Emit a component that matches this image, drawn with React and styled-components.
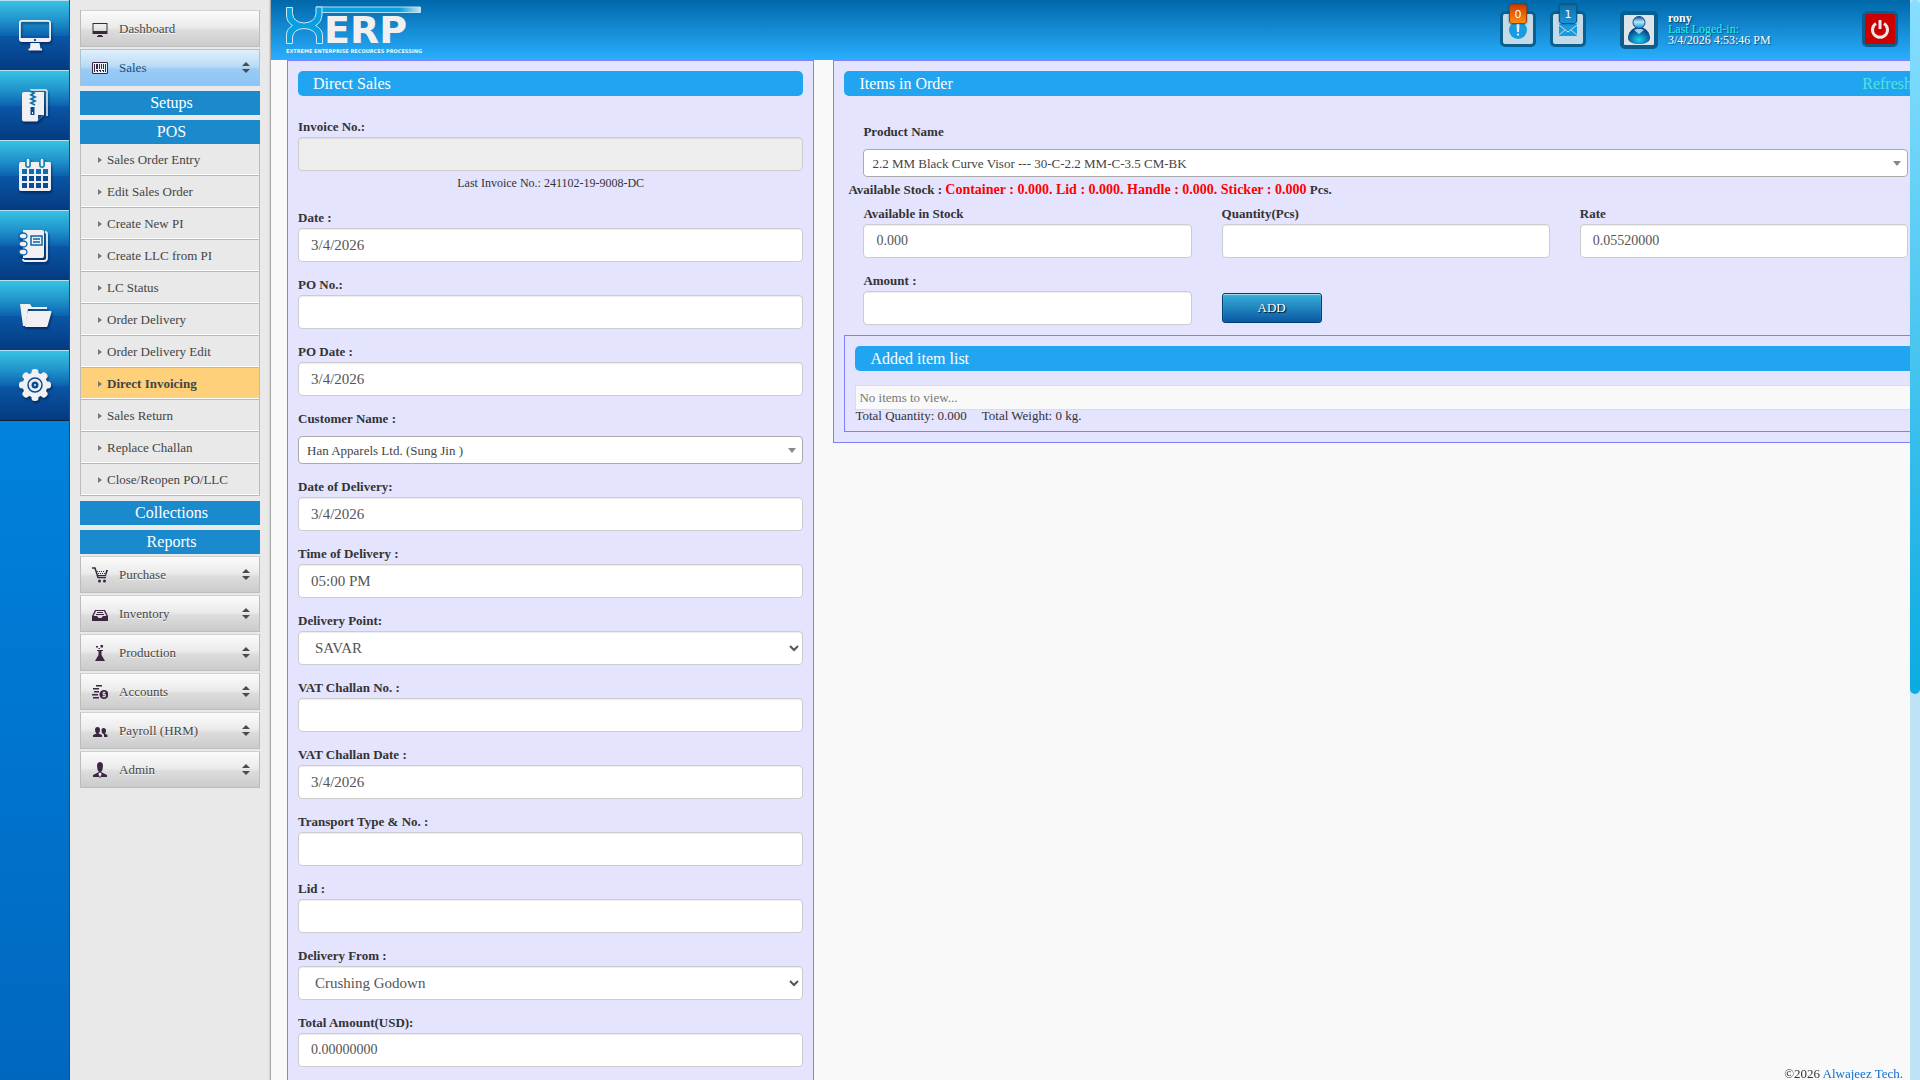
import React from "react";
import styled, { createGlobalStyle, css } from "styled-components";

const GlobalStyle = createGlobalStyle`
  *, *::before, *::after { box-sizing: border-box; }
  body {
    margin: 0;
    background: #f9f9f9;
    color: #333;
    font-family: "Book Antiqua", "Liberation Serif", serif;
    font-size: 13px;
    line-height: 18px;
  }
  button, input, select { font-family: inherit; margin: 0; }
  a { text-decoration: none; }
`;

const Shell = styled.div`
  display: flex;
  height: 100vh;
  padding-right: 10px;
  overflow: hidden;
`;

/* ---------- icon rail ---------- */

const Rail = styled.nav`
  flex: 0 0 70px;
  display: flex;
  flex-direction: column;
  border-right: 1px solid #04539b;
  background: linear-gradient(#0094f0, #0067bf);
`;

const RailButton = styled.button`
  display: grid;
  place-items: center;
  width: 100%;
  height: 70px;
  padding: 0 0 2px;
  border: 0;
  border-top: 1px solid #b5e2f3;
  background: linear-gradient(#38c2e2 0%, #1f93cc 28%, #0c64b0 50%, #0a56a6 51%, #043a80 100%);
  cursor: pointer;

  &:last-child { box-shadow: 0 1px #06223f; }

  svg { filter: drop-shadow(1px 2px 1px rgba(0, 20, 60, 0.6)); }
`;

/* ---------- side menu ---------- */

const Sidebar = styled.aside`
  flex: 0 0 201px;
  padding: 10px;
  border-right: 1px solid #a9a9a9;
  background: #e9e9e9;
  box-shadow: inset -2px 0 1px -1px #d4d4d4;
`;

const MenuButton = styled.button`
  display: flex;
  align-items: center;
  gap: 11px;
  width: 180px;
  height: 37px;
  margin-bottom: 2px;
  padding: 0 9px 0 11px;
  border: 1px solid #bcbcbc;
  border-top-color: #d0d0d0;
  background: linear-gradient(#fbfbfb 0%, #ebebeb 46%, #dcdcdc 56%, #cbcbcb 100%);
  color: #444;
  font-size: 13px;
  text-align: left;
  text-shadow: 0 1px #fff;
  cursor: pointer;

  ${(p) => p.$active && css`
    border-color: #a5c4d6;
    background: linear-gradient(#e0effb 0%, #b9dbf7 46%, #9bcbf5 56%, #8bc4f6 100%);
    color: #15527c;
    text-shadow: none;
  `}

  span { flex: 1; }
`;

const GroupButton = styled.button`
  display: block;
  width: 180px;
  height: 24px;
  margin: 5px 0 0;
  padding: 0 0 0 3px;
  border: 0;
  background: #1a8acd;
  color: #fff;
  font-size: 16px;
  line-height: 24px;
  cursor: pointer;
`;

const MenuGroup = styled.div`
  margin: ${(p) => (p.$first ? "0" : "2px 0 0")};
`;

const SubList = styled.ul`
  width: 180px;
  margin: 0;
  padding: 0;
  list-style: none;
  border: solid #bcbcbc;
  border-width: 0 1px;
`;

const SubLink = styled.a`
  display: flex;
  align-items: center;
  gap: 4px;
  height: 32px;
  padding-left: 17px;
  border-bottom: 1px solid #b8b8b8;
  box-shadow: inset 0 -1px #fff;
  background: ${(p) => (p.$current ? "#fed07a" : "transparent")};
  color: #444;
  font-weight: ${(p) => (p.$current ? "bold" : "normal")};
  white-space: nowrap;

  &::before {
    content: "";
    border: 3px solid transparent;
    border-left: 4px solid #777;
    border-right: 0;
    margin-right: 1px;
  }
`;

/* ---------- header ---------- */

const Workspace = styled.div`
  flex: 1;
  min-width: 0;
  display: flex;
  flex-direction: column;
`;

const Header = styled.header`
  flex: 0 0 60px;
  display: flex;
  align-items: flex-start;
  padding: 0 12px 0 15px;
  background: linear-gradient(#0067a9, #2aafff);
`;

const Logo = styled.a`
  display: flex;
  flex-direction: column;
  margin-right: auto;
  padding-top: 5px;
  color: #f2f2f2;
  font: bold 5px/7px "DejaVu Sans", sans-serif;
  white-space: nowrap;

  svg { overflow: visible; }
`;

const HeaderTools = styled.div`
  display: flex;
  gap: 14px;
  padding-top: 11px;
`;

const ToolButton = styled.button`
  position: relative;
  display: grid;
  place-items: center;
  width: 36px;
  height: 36px;
  padding: 0;
  border: 3px solid #0a5f8e;
  border-radius: 5px;
  background: ${(p) => (p.$danger ? "#cc0000" : "#c3dbe8")};
  cursor: pointer;
`;

const Badge = styled.span`
  position: absolute;
  top: -10px;
  left: 6px;
  width: 18px;
  height: 20px;
  border: 1px solid ${(p) => (p.$hot ? "#a33a08" : "#07588c")};
  border-radius: 3px;
  background: ${(p) => (p.$hot ? "linear-gradient(#cf3c00, #fb8c10)" : "linear-gradient(#0d6ea9, #1e92d6)")};
  box-shadow: 0 0 2px rgba(0, 40, 80, 0.7);
  color: #fff;
  font: 11px/19px "DejaVu Sans", sans-serif;
  text-align: center;
`;

const UserBlock = styled.div`
  display: flex;
  gap: 10px;
  width: 242px;
  margin-left: 34px;
  padding-top: 11px;
`;

const Avatar = styled.span`
  display: grid;
  place-items: center;
  width: 38px;
  height: 38px;
  border: 4px solid #0a5f8e;
  border-radius: 5px;
  background: #dde3e8;
`;

const UserText = styled.div`
  padding-top: 2px;
  color: #fff;
  font-size: 12px;
  line-height: 11px;
  text-shadow: 1px 1px 1px rgba(0, 0, 0, 0.5);
  strong, em, time { display: block; }
  em { color: #1ef4f4; font-style: normal; }
`;

/* ---------- content ---------- */

const Content = styled.main`
  flex: 1;
  min-height: 0;
  overflow: hidden auto;
  scrollbar-width: none;
`;

const Columns = styled.div`
  display: grid;
  grid-template-columns: 10fr 21fr;
  gap: 19px;
  align-items: start;
  width: calc(100% + 31px);
  padding-left: 16px;
`;

const Panel = styled.section`
  padding: 10px;
  border: 1px solid #8080ff;
  background: #e4e4ff;
`;

const PanelTitle = styled.h2`
  display: flex;
  justify-content: space-between;
  margin: 0;
  height: 25px;
  padding: 0 18px 0 15px;
  border-radius: 5px;
  background: #22a5f1;
  color: #fff;
  font-size: 16px;
  font-weight: normal;
  line-height: 25px;

  a { color: #4fe3dc; }
`;

const FieldStack = styled.form`
  padding-top: 23px;
`;

const FieldBox = styled.div`
  display: flex;
  flex-direction: column;
  margin-bottom: 15px;
`;

const Label = styled.label`
  margin-bottom: ${(p) => (p.$spaced ? "9px" : "2px")};
  font-weight: bold;
  line-height: 16px;
`;

const control = css`
  width: 100%;
  height: 34px;
  border: 1px solid #ccc;
  border-radius: 4px;
  background: #fff;
  box-shadow: inset 0 1px 1px rgba(0, 0, 0, 0.075);
  color: #555;
  font-size: ${(p) => (p.$numeric ? "14px" : "15px")};
`;

const TextInput = styled.input`
  ${control}
  padding: 6px 12px;
  &:disabled { background: #eee; }
`;

const NativeSelect = styled.select`
  ${control}
  padding: 6px 12px;
`;

const Hint = styled.p`
  margin: 0;
  font-size: 12px;
  line-height: 24px;
  text-align: center;
`;

const ComboWrap = styled.div`
  position: relative;
  &::after {
    content: "";
    position: absolute;
    top: 12px;
    right: 7px;
    border: 4px solid transparent;
    border-top: 5px solid #888;
    border-bottom: 0;
    pointer-events: none;
  }
`;

const ComboSelect = styled.select`
  appearance: none;
  display: block;
  width: 100%;
  height: 28px;
  padding: 0 8px;
  border: 1px solid #aaa;
  border-radius: 4px;
  background: #fff;
  color: #444;
  font-size: 13px;
`;

const OrderForm = styled.form`
  padding: 28px 22px 0 19px;
`;

const ProductField = styled.div`
  display: flex;
  flex-direction: column;
`;

const Stock = styled.p`
  margin: 4px 0 7px -15px;
  font-weight: bold;
  line-height: 18px;
  span { color: #f00; font-size: 14px; }
`;

const OrderGrid = styled.div`
  display: grid;
  grid-template-columns: repeat(3, 1fr);
  column-gap: 30px;
  margin-bottom: -5px;
`;

const AddButton = styled.button`
  align-self: start;
  width: 100px;
  height: 30px;
  margin-top: 20px;
  border: 1px solid #033e72;
  border-radius: 3px;
  background: linear-gradient(#36b0d8, #0a58a4);
  box-shadow: inset 0 1px 1px rgba(255, 255, 255, 0.6);
  color: #fff;
  font-size: 13px;
  text-shadow: 1px 1px 1px #000;
  cursor: pointer;
`;

const ItemTable = styled.table`
  width: 100%;
  margin-top: 14px;
  border-collapse: collapse;
  td {
    height: 24px;
    padding: 0 3px;
    border: 1px solid #ddd;
    background: #f9f9f9;
    color: #777;
    line-height: 22px;
  }
`;

const Totals = styled.div`
  display: flex;
  gap: 15px;
  line-height: 11px;
`;

const Footer = styled.footer`
  position: fixed;
  right: 17px;
  bottom: -3px;
  a { color: #0a6fd0; }
`;

const ScrollTrack = styled.div`
  position: fixed;
  inset: 0 0 0 auto;
  width: 10px;
  background: #bee3f5;
`;

const ScrollThumb = styled.div`
  height: calc(64% + 3px);
  border-radius: 5px;
  background: linear-gradient(#88dfff, #0aabe1);
`;

/* ---------- drawings ---------- */

const W = "#f0f0f2";
const D = "#3b2840";

const railIcons = [
  ["Desktop", (
    <g fill={W}>
      <path fillRule="evenodd" d="M4 2h26a3 3 0 0 1 3 3v16a3 3 0 0 1-3 3H4a3 3 0 0 1-3-3V5a3 3 0 0 1 3-3zm0 1.800a1.200 1.200 0 0 0-1.200 1.200V20h28.400V5a1.200 1.200 0 0 0-1.200-1.200z" />
      <path d="M12.500 25h9l1 5.500h1.500v2H10.500v-2H12z" />
      <circle cx="17" cy="22" r="1.200" fill="#0b5aa8" />
    </g>
  )],
  ["Archive", (
    <g>
      <path d="M12 2h15.500a1.500 1.500 0 0 1 1.500 1.500V28" fill="none" stroke={W} strokeWidth="1.500" />
      <path d="M6 4h20v23l-7 6.500H6a2 2 0 0 1-2-2V6a2 2 0 0 1 2-2z" fill={W} />
      <path d="M20 32.500V27h5.500z" fill="#0a4a96" />
      <path d="M12 3l4 2-3 2 4 2-4 2 4 2-4 2 4 2" fill="none" stroke="#0d6fae" strokeWidth="1.800" />
      <path d="M12.500 19h4v8h-4z" fill="#0a4a96" />
      <path d="M14 24h1v2h-1z" fill={W} />
    </g>
  )],
  ["Calendar", (
    <g>
      <path d="M2 4h30a2 2 0 0 1 1 2v25a2 2 0 0 1-2 2H3a2 2 0 0 1-2-2V6z" fill={W} />
      <path d="M10 3v4M24 3v4" stroke="#1a86c2" strokeWidth="6" strokeLinecap="round" />
      <path d="M10 2v5M24 2v5" stroke={W} strokeWidth="2.500" strokeLinecap="round" />
      {[11, 18, 25].map((y) => [4, 11, 18, 25].map((x) => (
        <rect key={`${x}-${y}`} x={x} y={y} width="5" height="5" fill={y > 17 ? "#0a4a96" : "#0f6db4"} />
      )))}
    </g>
  )],
  ["Notebook", (
    <g>
      <path d="M27 4a2 2 0 0 1 2 2v24a3 3 0 0 1-3 3H7q-2 0-2-2" fill="none" stroke={W} strokeWidth="1.800" />
      <path d="M5 2h19a2 2 0 0 1 2 2v24a2 2 0 0 1-2 2H5z" fill={W} />
      {[8, 16, 24].map((y) => <ellipse key={y} cx="5" cy={y} rx="4" ry="3" fill={W} stroke="#0d62ab" strokeWidth="1.300" />)}
      <path d="M13 8h11v9H13zM15 11h7M15 14h7" fill="none" stroke="#0d62ab" strokeWidth="1.500" />
    </g>
  )],
  ["Folders", (
    <g fill={W}>
      <path d="M2 6h10l2 3h15v2H10L7.500 28H5z" />
      <path d="M10.500 14h22L28.500 28H8z" stroke={W} strokeLinejoin="round" strokeWidth="2" />
    </g>
  )],
  ["Settings", (
    <g>
      {[0, 45, 90, 135].map((r) => (
        <rect key={r} x="13.500" y="1" width="7" height="32" rx="3" fill={W} transform={`rotate(${r} 17 17)`} />
      ))}
      <circle cx="17" cy="17" r="12.500" fill={W} />
      <circle cx="17" cy="17" r="7" fill="none" stroke="#0b4d93" strokeWidth="1.500" />
      <circle cx="17" cy="17" r="3.500" fill="#0b4d93" />
      <circle cx="17" cy="17" r="1" fill={W} />
    </g>
  )],
];

const menuIcons = {
  Dashboard: <path fillRule="evenodd" d="M.5 2h15v11H.5zm1 1v7h13V3zM6 14h4v1h1v1H5v-1h1z" />,
  Sales: (
    <g>
      <path d="M.5 2.500h15v11H.5z" fill="#e8f3fc" stroke={D} />
      <path d="M2 4h1v8H2zM4 4h2v5H4zM7 4h1v5H7zM9 4h1v5H9zM11 4h1v5h-1zM13 4h1v8h-1zM4 10h2v1H4zM5 11h1v1H5zM7 10h2v1H7zM8 11h1v1H8zM10 10h2v1h-2zM11 11h1v1h-1z" />
    </g>
  ),
  Purchase: (
    <g>
      <path d="M0 1h3l3 9.500h8" fill="none" stroke={D} strokeWidth="1.500" />
      <path d="M5 4h1v1H5zM7 4h1v1H7zM9 4h1v1H9zM11 4h1v1h-1zM6 6h1v1H6zM8 6h1v1H8zM10 6h1v1h-1zM12 6h1v1h-1zM14 3h2l-2 6h-1zM5 8h9v1H5z" />
      <circle cx="7.500" cy="14" r="1.500" /><circle cx="12.500" cy="14" r="1.500" />
    </g>
  ),
  Inventory: <path fillRule="evenodd" d="M3 4h10l3 6v5H0v-5zm1 1l-2.500 5H5l1.500 2h3l1.500-2h3.500L12 5zM5 6h6v1H5zM4 8h8v1H4z" />,
  Production: <path d="M4 1h2v1.500H4zM8.500 0h2.500v2.500H8.500zM6.500 3H8v1H6.500zM5 5h6v1H9.500v4l3.500 6H3l3.500-6V6H5z" />,
  Accounts: (
    <g>
      <path d="M4 1h6v1.500H4zM1 4h6v1.500H1zM2 7h5v1.500H2zM0 10h6v1.500H0zM1 13h6v1.500H1z" />
      <circle cx="12" cy="10.500" r="4.500" />
      <path d="M13.500 8.500h-2.500v2h2.500v2H10.500M12 7.500v6" stroke="#eee" strokeWidth=".8" fill="none" />
    </g>
  ),
  "Payroll (HRM)": <path d="M3 7q0-3 2.500-3T8 7q0 2-1.500 3.500L10 12v2H1v-2l3.500-1.500Q3 9 3 7zM9.500 7q0-2 2-2 2.500 0 2.500 2.500 0 2-1 3l2.500 1.500v2H12v-2.500l-2-1.500z" />,
  Admin: (
    <g>
      <path d="M5 4q0-4 3-4t3 4-2 6H7Q5 8 5 4zM1 13l6-3h2l6 3v2H1z" />
      <path d="M8 10l2 2-2 4-2-4z" fill="#eee" stroke={D} strokeWidth=".6" />
    </g>
  ),
};

const MenuIcon = ({ name }) => (
  <svg width="16" height="16" viewBox="0 0 16 16" fill={D} aria-hidden="true">{menuIcons[name]}</svg>
);

const Updown = () => (
  <svg width="8" height="11" viewBox="0 0 8 11" fill="#4b4b4b" aria-hidden="true">
    <path d="M4 0l4 4H0zM4 11l4-4H0z" />
  </svg>
);

const LogoMark = () => (
  <svg width="136" height="43" viewBox="0 0 136 43" aria-hidden="true">
    <defs>
      <linearGradient id="tail" x1="0" x2="1">
        <stop offset="0.800" stopColor="#06a0e0" />
        <stop offset="1" stopColor="#c9e3f0" />
      </linearGradient>
    </defs>
    <path d="M30 2h104.500v5.500H36" fill="url(#tail)" stroke="#b9def0" />
    <path d="M.5 2.500h6v6q1 9 11.500 9.500 11-.5 12-9.500V2h6V10q-1 8-6.500 10.500Q36 24 36.500 30v8.500h-6V32q-1-8-12.500-8.500Q7.500 24 6.500 32v6.500h-6V30q0-6 6-9.500Q.5 17 .5 10z" fill="#06a0e0" stroke="#cfe6f2" />
    <text x="38" y="38" fill="#f0f0f0" fontSize="38" fontWeight="bold" fontFamily="DejaVu Sans">ERP</text>
  </svg>
);

/* ---------- page parts ---------- */

const subItems = [
  "Sales Order Entry", "Edit Sales Order", "Create New PI", "Create LLC from PI", "LC Status",
  "Order Delivery", "Order Delivery Edit", "Direct Invoicing", "Sales Return", "Replace Challan",
  "Close/Reopen PO/LLC",
];

const Module = ({ name, active, plain }) => (
  <MenuButton type="button" $active={active}>
    <MenuIcon name={name} />
    <span>{name}</span>
    {!plain && <Updown />}
  </MenuButton>
);

const Combo = ({ id, value }) => (
  <ComboWrap><ComboSelect id={id}><option>{value}</option></ComboSelect></ComboWrap>
);

const Field = ({ id, label, kind = "text", value = "", disabled, numeric, hint }) => (
  <FieldBox>
    <Label htmlFor={id} $spaced={kind === "combo"}>{label}</Label>
    {kind === "text" && <TextInput id={id} defaultValue={value} disabled={disabled} $numeric={numeric} />}
    {kind === "select" && <NativeSelect id={id}><option>{value}</option></NativeSelect>}
    {kind === "combo" && <Combo id={id} value={value} />}
    {hint && <Hint>{hint}</Hint>}
  </FieldBox>
);

const salesFields = [
  { id: "invoice", label: "Invoice No.:", disabled: true, hint: "Last Invoice No.: 241102-19-9008-DC" },
  { id: "date", label: "Date :", value: "3/4/2026" },
  { id: "po", label: "PO No.:" },
  { id: "poDate", label: "PO Date :", value: "3/4/2026" },
  { id: "customer", label: "Customer Name :", kind: "combo", value: "Han Apparels Ltd. (Sung Jin )" },
  { id: "deliveryDate", label: "Date of Delivery:", value: "3/4/2026" },
  { id: "deliveryTime", label: "Time of Delivery :", value: "05:00 PM" },
  { id: "deliveryPoint", label: "Delivery Point:", kind: "select", value: "SAVAR" },
  { id: "vatNo", label: "VAT Challan No. :" },
  { id: "vatDate", label: "VAT Challan Date :", value: "3/4/2026" },
  { id: "transport", label: "Transport Type & No. :" },
  { id: "lid", label: "Lid :" },
  { id: "deliveryFrom", label: "Delivery From :", kind: "select", value: "Crushing Godown" },
  { id: "total", label: "Total Amount(USD):", value: "0.00000000", numeric: true },
];

export default function App() {
  return (
    <>
      <GlobalStyle />
      <Shell>
        <Rail>
          {railIcons.map(([name, art]) => (
            <RailButton key={name} type="button" aria-label={name}>
              <svg width="34" height="34" viewBox="0 0 34 34" aria-hidden="true">{art}</svg>
            </RailButton>
          ))}
        </Rail>

        <Sidebar>
          <Module name="Dashboard" plain />
          <Module name="Sales" active />
          <MenuGroup $first>
            <GroupButton type="button">Setups</GroupButton>
            <GroupButton type="button">POS</GroupButton>
            <SubList>
              {subItems.map((item) => (
                <li key={item}><SubLink href="#" $current={item === "Direct Invoicing"}>{item}</SubLink></li>
              ))}
            </SubList>
            <GroupButton type="button">Collections</GroupButton>
            <GroupButton type="button">Reports</GroupButton>
          </MenuGroup>
          <MenuGroup>
            {["Purchase", "Inventory", "Production", "Accounts", "Payroll (HRM)", "Admin"].map((m) => (
              <Module key={m} name={m} />
            ))}
          </MenuGroup>
        </Sidebar>

        <Workspace>
          <Header>
            <Logo href="#">
              <LogoMark />
              EXTREME ENTERPRISE RECOURCES PROCESSING
            </Logo>
            <HeaderTools>
              <ToolButton type="button" aria-label="Alerts">
                <Badge $hot>0</Badge>
                <svg width="20" height="20" viewBox="0 0 20 20" aria-hidden="true">
                  <circle cx="10" cy="11" r="9" fill="#1a9be0" />
                  <path d="M8.500 5h3l-.5 8H9zM9 14.500h2v2H9z" fill="#e4eef4" />
                </svg>
              </ToolButton>
              <ToolButton type="button" aria-label="Messages">
                <Badge>1</Badge>
                <svg width="20" height="20" viewBox="0 0 20 20" aria-hidden="true">
                  <path d="M1 5h18v12H1z" fill="#1a9be0" />
                  <path d="M1 6l9 7 9-7M1 16l6-5M19 16l-6-5" fill="none" stroke="#c3dbe8" />
                </svg>
              </ToolButton>
            </HeaderTools>
            <UserBlock>
              <Avatar>
                <svg width="30" height="30" viewBox="0 0 30 30" aria-hidden="true">
                  <defs>
                    <radialGradient id="body" cx="0.500" cy="0.750" r="0.600">
                      <stop offset="0" stopColor="#18d4ee" /><stop offset="1" stopColor="#06408a" />
                    </radialGradient>
                    <linearGradient id="head" x2="0" y2="1">
                      <stop offset="0" stopColor="#0b4b92" /><stop offset="0.450" stopColor="#b6ecfa" /><stop offset="1" stopColor="#1088c4" />
                    </linearGradient>
                  </defs>
                  <path d="M15 12c7 0 11 6 11 11 0 4-5 6-11 6S4 27 4 23c0-5 4-11 11-11z" fill="url(#body)" />
                  <path d="M10 15l5 4 5-4-5-2z" fill="#c8f1fa" opacity=".8" />
                  <circle cx="15" cy="7.500" r="6" fill="url(#head)" stroke="#0a4a8e" />
                </svg>
              </Avatar>
              <UserText>
                <strong>rony</strong>
                <em>Last Loged-in:</em>
                <time>3/4/2026 4:53:46 PM</time>
              </UserText>
            </UserBlock>
            <HeaderTools>
              <ToolButton type="button" $danger aria-label="Log out">
                <svg width="20" height="20" viewBox="0 0 20 20" fill="none" stroke="#e8e8e8" strokeWidth="3" aria-hidden="true">
                  <path d="M6 4.500a7.500 7.500 0 1 0 8 0M10 1v9" />
                </svg>
              </ToolButton>
            </HeaderTools>
          </Header>

          <Content>
            <Columns>
              <Panel>
                <PanelTitle>Direct Sales</PanelTitle>
                <FieldStack>
                  {salesFields.map((f) => <Field key={f.id} {...f} />)}
                </FieldStack>
              </Panel>

              <Panel>
                <PanelTitle>Items in Order <a href="#">Refresh</a></PanelTitle>
                <OrderForm>
                  <ProductField>
                    <Label htmlFor="product" $spaced>Product Name</Label>
                    <Combo id="product" value="2.2 MM Black Curve Visor --- 30-C-2.2 MM-C-3.5 CM-BK" />
                  </ProductField>
                  <Stock>
                    Available Stock : <span>Container : 0.000. Lid : 0.000. Handle : 0.000. Sticker : 0.000</span> Pcs.
                  </Stock>
                  <OrderGrid>
                    <Field id="stock" label="Available in Stock" value="0.000" numeric />
                    <Field id="qty" label="Quantity(Pcs)" />
                    <Field id="rate" label="Rate" value="0.05520000" numeric />
                    <Field id="amount" label="Amount :" />
                    <AddButton type="button">ADD</AddButton>
                  </OrderGrid>
                </OrderForm>
                <Panel as="div">
                  <PanelTitle>Added item list</PanelTitle>
                  <ItemTable><tbody><tr><td>No items to view...</td></tr></tbody></ItemTable>
                  <Totals><span>Total Quantity: 0.000</span><span>Total Weight: 0 kg.</span></Totals>
                </Panel>
              </Panel>
            </Columns>
          </Content>
        </Workspace>
      </Shell>
      <Footer>©2026 <a href="#">Alwajeez Tech.</a></Footer>
      <ScrollTrack><ScrollThumb /></ScrollTrack>
    </>
  );
}
